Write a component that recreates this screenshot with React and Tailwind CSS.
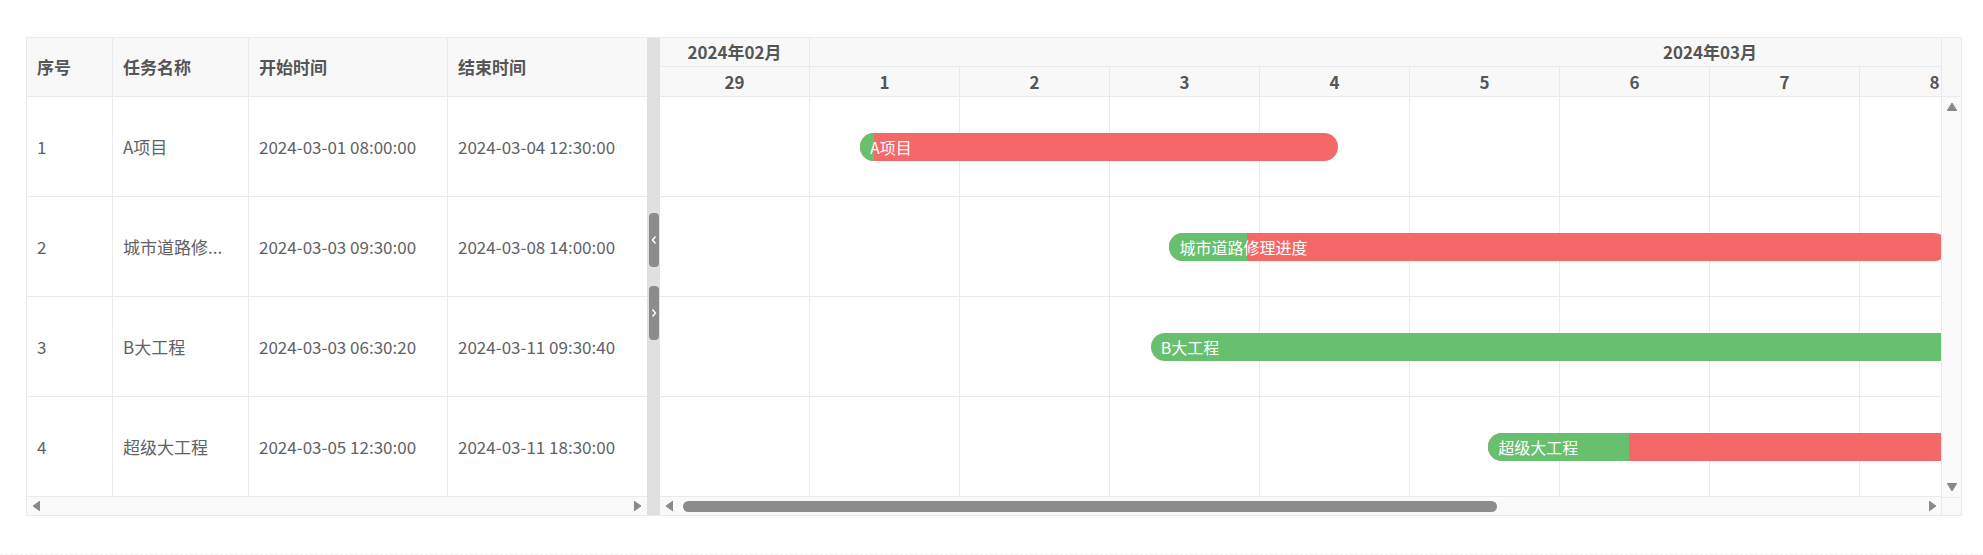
import React from "react";

const DAY_W = 150;
const ORIGIN = new Date(2024, 1, 29).getTime();
const DAY_MS = 24 * 60 * 60 * 1000;
const NAME_MAX = 5;

const columns = [
  { key: "seq", title: "序号", width: "w-[86px]", border: true },
  { key: "name", title: "任务名称", width: "w-[136px]", border: true },
  { key: "start", title: "开始时间", width: "w-[199px]", border: true },
  { key: "end", title: "结束时间", width: "w-[199px]", border: false },
];

const tasks = [
  { seq: 1, name: "A项目", start: "2024-03-01 08:00:00", end: "2024-03-04 12:30:00", progress: 3 },
  { seq: 2, name: "城市道路修理进度", start: "2024-03-03 09:30:00", end: "2024-03-08 14:00:00", progress: 10 },
  { seq: 3, name: "B大工程", start: "2024-03-03 06:30:20", end: "2024-03-11 09:30:40", progress: 100 },
  { seq: 4, name: "超级大工程", start: "2024-03-05 12:30:00", end: "2024-03-11 18:30:00", progress: 15 },
];

const months = [
  { label: "2024年02月", days: [29] },
  { label: "2024年03月", days: [1, 2, 3, 4, 5, 6, 7, 8, 9, 10, 11, 12] },
];

const allDays = months.flatMap((m) => m.days);

const toX = (str) => ((new Date(str.replace(" ", "T")).getTime() - ORIGIN) / DAY_MS) * DAY_W;

// long names are clipped in the list column, the bar shows the full text
const cellText = (task, key) => {
  const value = task[key];
  if (key === "name" && value.length > NAME_MAX + 1) return value.slice(0, NAME_MAX) + "...";
  return value;
};

function Triangle({ dir, className = "" }) {
  const points = {
    left: "7,0 7,10 0,5",
    right: "0,0 0,10 7,5",
    up: "0,8 10,8 5,0",
    down: "0,0 10,0 5,8",
  }[dir];
  const box = dir === "left" || dir === "right" ? "0 0 7 10" : "0 0 10 8";
  const size = dir === "left" || dir === "right" ? "w-[7px] h-[10px]" : "w-[10px] h-[8px]";
  return (
    <svg viewBox={box} className={`${size} ${className}`}>
      <polygon points={points} fill="#8a8a8a" strokeLinejoin="round" stroke="#8a8a8a" strokeWidth="1" />
    </svg>
  );
}

function SplitHandle({ dir }) {
  return (
    <div className="flex h-[54px] w-[10px] items-center justify-center rounded-[4px] bg-[#8c8c8c]">
      <svg viewBox="0 0 6 10" className="h-[10px] w-[6px]">
        <polyline
          points={dir === "left" ? "4.5,1.5 1.5,5 4.5,8.5" : "1.5,1.5 4.5,5 1.5,8.5"}
          fill="none"
          stroke="#fff"
          strokeWidth="1.4"
        />
      </svg>
    </div>
  );
}

function TaskBar({ task }) {
  const left = toX(task.start);
  const width = toX(task.end) - left;
  return (
    <div
      className="absolute top-1/2 h-[28px] -translate-y-1/2 overflow-hidden rounded-full bg-[#f56868]"
      style={{ left, width }}
    >
      <div className="h-full bg-[#67c06e]" style={{ width: `${task.progress}%` }} />
      <span className="absolute inset-y-0 left-[10px] flex items-center whitespace-nowrap text-[16px] text-white">
        {task.name}
      </span>
    </div>
  );
}

export default function App() {
  return (
    <div className="min-h-[555px] bg-white font-['Noto_Sans_CJK_SC',sans-serif] text-[17px] text-[#606266]">
      <div className="ml-[26px] pt-[37px]">
        <div className="flex w-[1936px] border border-[#e8eaec]">
          {/* task list */}
          <div className="flex w-[620px] flex-col">
            <div className="flex h-[59px] border-b border-[#e8eaec] bg-[#f8f8f9]">
              {columns.map((col) => (
                <div
                  key={col.key}
                  className={`${col.width} flex items-center px-[10px] font-bold text-[#555] ${
                    col.border ? "border-r border-[#e8eaec]" : ""
                  }`}
                >
                  {col.title}
                </div>
              ))}
            </div>
            {tasks.map((task) => (
              <div key={task.seq} className="flex h-[100px] border-b border-[#e8eaec]">
                {columns.map((col) => (
                  <div
                    key={col.key}
                    className={`${col.width} flex items-center px-[10px] ${
                      col.border ? "border-r border-[#e8eaec]" : ""
                    }`}
                  >
                    <span className="whitespace-nowrap">{cellText(task, col.key)}</span>
                  </div>
                ))}
              </div>
            ))}
            <div className="flex h-[18px] items-center justify-between bg-[#fafafa] px-[6px]">
              <Triangle dir="left" />
              <Triangle dir="right" />
            </div>
          </div>

          {/* splitter */}
          <div className="flex w-[13px] flex-col items-center justify-center gap-[19px] bg-[#e0e0e0]">
            <SplitHandle dir="left" />
            <SplitHandle dir="right" />
          </div>

          {/* gantt view */}
          <div className="flex w-[1281px] flex-col overflow-hidden">
            <div className="w-[1950px]">
              <div className="flex h-[29px] border-b border-[#e8eaec] bg-[#f8f8f9]">
                {months.map((m, i) => (
                  <div
                    key={m.label}
                    className={`flex items-center justify-center font-bold text-[#555] ${
                      i === 0 ? "border-r border-[#e8eaec]" : ""
                    }`}
                    style={{ width: m.days.length * DAY_W }}
                  >
                    {m.label}
                  </div>
                ))}
              </div>
              <div className="flex h-[30px] border-b border-[#e8eaec] bg-[#f8f8f9]">
                {allDays.map((d) => (
                  <div
                    key={d}
                    className="flex w-[150px] shrink-0 items-center justify-center border-r border-[#e8eaec] font-bold text-[#555]"
                  >
                    {d}
                  </div>
                ))}
              </div>
              {tasks.map((task) => (
                <div key={task.seq} className="relative flex h-[100px] border-b border-[#e8eaec]">
                  {allDays.map((d) => (
                    <div key={d} className="w-[150px] shrink-0 border-r border-[#e8eaec]" />
                  ))}
                  <TaskBar task={task} />
                </div>
              ))}
            </div>
            <div className="flex h-[18px] items-center bg-[#fafafa] pl-[6px] pr-[5px]">
              <Triangle dir="left" />
              <div className="ml-[10px] h-[11px] w-[814px] rounded-full bg-[#8c8c8c]" />
              <div className="flex-1" />
              <Triangle dir="right" />
            </div>
          </div>

          {/* vertical scrollbar */}
          <div className="flex w-[20px] flex-col border-l border-[#e8eaec]">
            <div className="h-[59px] border-b border-[#e8eaec] bg-[#f8f8f9]" />
            <div className="flex h-[400px] flex-col items-center justify-between bg-[#fafafa] py-[6px]">
              <Triangle dir="up" />
              <Triangle dir="down" />
            </div>
            <div className="h-[18px] border-t border-[#e8eaec] bg-[#fafafa]" />
          </div>
        </div>
      </div>
      <div className="mt-[38px] border-t border-dashed border-[#eef0f4]" />
    </div>
  );
}
